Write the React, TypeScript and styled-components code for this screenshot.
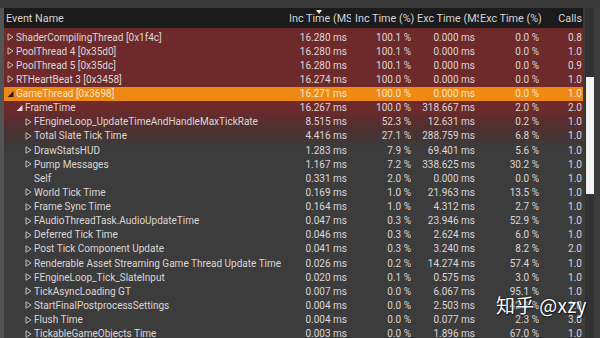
import React from "react";
import styled, { createGlobalStyle } from "styled-components";

const Global = createGlobalStyle`
  html, body { margin: 0; padding: 0; background: #3c3c3c; overflow: hidden; }
  body { font-family: Roboto, "Noto Sans", sans-serif; }
  #root { width: 600px; height: 338px; }
`;

const Page = styled.div`
  position: relative;
  width: 600px;
  height: 338px;
  background: #3c3c3c;
  display: flex;
  flex-direction: column;
  overflow: hidden;
`;

const TopStrip = styled.div`
  height: 8px;
  flex: none;
  background: #3a3a3a;
`;

const Body = styled.div`
  flex: 1;
  display: flex;
  min-height: 0;
`;

const LeftEdge = styled.div`
  width: 4px;
  flex: none;
  background: #545454;
`;

const Table = styled.div`
  flex: 1;
  display: flex;
  flex-direction: column;
  min-width: 0;
`;

const Cols = "281px 66px 64px 64px 64px 40px";

const HeaderRow = styled.div`
  position: relative;
  height: 20px;
  flex: none;
  display: grid;
  grid-template-columns: ${Cols};
  background: #1b1b1b;
  color: #d4d4d4;
  font-size: 10.8px;
  align-items: center;
`;

const HeadCell = styled.div<{ $align?: "left" | "right"; $pad?: number }>`
  overflow: hidden;
  white-space: nowrap;
  text-align: ${(p) => p.$align ?? "left"};
  padding: ${(p) => (p.$align === "right" ? `0 1px 0 0` : `0 0 0 ${p.$pad ?? 4}px`)};
`;

const SortMark = styled.div`
  position: absolute;
  left: 312px;
  top: 2px;
  width: 0;
  height: 0;
  border-left: 3px solid transparent;
  border-right: 3px solid transparent;
  border-top: 4px solid #f0f0f0;
`;

const List = styled.div`
  flex: 1;
  padding-top: 2px;
  background: linear-gradient(
    to bottom,
    #6e2a2b 0px,
    #6e2a2b 80px,
    #4c3131 102px,
    #3d3a3a 118px,
    #3c3c3c 126px
  );
`;

type Variant = "normal" | "selected";

const Row = styled.div<{ $variant: Variant }>`
  height: 14.14px;
  display: grid;
  grid-template-columns: ${Cols};
  align-items: center;
  font-size: 10px;
  white-space: nowrap;
  background: ${(p) => (p.$variant === "selected" ? "#ee8913" : "transparent")};
  color: ${(p) => (p.$variant === "selected" ? "#f6e6cc" : "#dcd6d6")};
`;

const NameCell = styled.div<{ $level: number }>`
  display: flex;
  align-items: center;
  padding-left: ${(p) => 3 + p.$level * 9}px;
  overflow: hidden;
`;

const Arrow = styled.span`
  width: 9px;
  height: 10px;
  flex: none;
  display: flex;
  align-items: center;
`;

const Num = styled.div<{ $pad?: number }>`
  text-align: right;
  padding-right: ${(p) => p.$pad ?? 4}px;
`;

const ScrollTrack = styled.div`
  position: relative;
  width: 17px;
  flex: none;
  background: #3b3b3b;
  display: flex;
  justify-content: flex-start;
`;

const ScrollGroove = styled.div`
  width: 9px;
  margin-left: 2px;
  background: #323232;
  position: relative;
`;

const Thumb = styled.div`
  position: absolute;
  left: 1px;
  top: 69px;
  width: 8px;
  height: 117px;
  background: #f4f4f4;
`;

const Watermark = styled.div`
  position: absolute;
  left: 496px;
  top: 291px;
  font-family: "Noto Sans CJK SC", Roboto, sans-serif;
  font-size: 19px;
  color: #ffffff;
  text-shadow: 0 0 2px rgba(0, 0, 0, 0.8), 1px 1px 1px rgba(0, 0, 0, 0.6);
  white-space: nowrap;
  letter-spacing: 0.3px;
`;

const Collapsed = () => (
  <svg width="7" height="8" viewBox="0 0 7 8">
    <path d="M1 0.8 L6 4 L1 7.2 Z" fill="none" stroke="#cfcfcf" strokeWidth="0.9" />
  </svg>
);

const Expanded = ({ color }: { color: string }) => (
  <svg width="7" height="8" viewBox="0 0 7 8">
    <path d="M6.5 1 L6.5 7 L0.5 7 Z" fill={color} />
  </svg>
);

type R = {
  name: string;
  level: number;
  kind: "collapsed" | "expanded" | "none";
  v: [string, string, string, string, string];
  sel?: boolean;
};

const rows: R[] = [
  { name: "ShaderCompilingThread [0x1f4c]", level: 0, kind: "collapsed", v: ["16.280 ms", "100.1 %", "0.000 ms", "0.0 %", "0.8"] },
  { name: "PoolThread 4 [0x35d0]", level: 0, kind: "collapsed", v: ["16.280 ms", "100.1 %", "0.000 ms", "0.0 %", "1.0"] },
  { name: "PoolThread 5 [0x35dc]", level: 0, kind: "collapsed", v: ["16.280 ms", "100.1 %", "0.000 ms", "0.0 %", "0.9"] },
  { name: "RTHeartBeat 3 [0x3458]", level: 0, kind: "collapsed", v: ["16.274 ms", "100.0 %", "0.000 ms", "0.0 %", "1.0"] },
  { name: "GameThread [0x3698]", level: 0, kind: "expanded", sel: true, v: ["16.271 ms", "100.0 %", "0.000 ms", "0.0 %", "1.0"] },
  { name: "FrameTime", level: 1, kind: "expanded", v: ["16.267 ms", "100.0 %", "318.667 ms", "2.0 %", "2.0"] },
  { name: "FEngineLoop_UpdateTimeAndHandleMaxTickRate", level: 2, kind: "collapsed", v: ["8.515 ms", "52.3 %", "12.631 ms", "0.2 %", "1.0"] },
  { name: "Total Slate Tick Time", level: 2, kind: "collapsed", v: ["4.416 ms", "27.1 %", "288.759 ms", "6.8 %", "1.0"] },
  { name: "DrawStatsHUD", level: 2, kind: "collapsed", v: ["1.283 ms", "7.9 %", "69.401 ms", "5.6 %", "1.0"] },
  { name: "Pump Messages", level: 2, kind: "collapsed", v: ["1.167 ms", "7.2 %", "338.625 ms", "30.2 %", "1.0"] },
  { name: "Self", level: 2, kind: "none", v: ["0.331 ms", "2.0 %", "0.000 ms", "0.0 %", "1.0"] },
  { name: "World Tick Time", level: 2, kind: "collapsed", v: ["0.169 ms", "1.0 %", "21.963 ms", "13.5 %", "1.0"] },
  { name: "Frame Sync Time", level: 2, kind: "collapsed", v: ["0.164 ms", "1.0 %", "4.312 ms", "2.7 %", "1.0"] },
  { name: "FAudioThreadTask.AudioUpdateTime", level: 2, kind: "collapsed", v: ["0.047 ms", "0.3 %", "23.946 ms", "52.9 %", "1.0"] },
  { name: "Deferred Tick Time", level: 2, kind: "collapsed", v: ["0.046 ms", "0.3 %", "2.624 ms", "6.0 %", "1.0"] },
  { name: "Post Tick Component Update", level: 2, kind: "collapsed", v: ["0.041 ms", "0.3 %", "3.240 ms", "8.2 %", "2.0"] },
  { name: "Renderable Asset Streaming Game Thread Update Time", level: 2, kind: "collapsed", v: ["0.026 ms", "0.2 %", "14.274 ms", "57.4 %", "1.0"] },
  { name: "FEngineLoop_Tick_SlateInput", level: 2, kind: "collapsed", v: ["0.020 ms", "0.1 %", "0.575 ms", "3.0 %", "1.0"] },
  { name: "TickAsyncLoading GT", level: 2, kind: "collapsed", v: ["0.007 ms", "0.0 %", "6.067 ms", "95.1 %", "1.0"] },
  { name: "StartFinalPostprocessSettings", level: 2, kind: "collapsed", v: ["0.004 ms", "0.0 %", "2.503 ms", "42.1 %", "1.0"] },
  { name: "Flush Time", level: 2, kind: "collapsed", v: ["0.004 ms", "0.0 %", "0.077 ms", "2.3 %", "3.0"] },
  { name: "TickableGameObjects Time", level: 2, kind: "collapsed", v: ["0.003 ms", "0.0 %", "1.896 ms", "67.0 %", "1.0"] },
];

export default function App() {
  return (
    <>
      <Global />
      <Page>
        <TopStrip />
        <Body>
          <LeftEdge />
          <Table>
            <HeaderRow>
              <HeadCell $pad={2}>Event Name</HeadCell>
              <HeadCell>Inc Time (MS)</HeadCell>
              <HeadCell>Inc Time (%)</HeadCell>
              <HeadCell $pad={2}>Exc Time (MS)</HeadCell>
              <HeadCell $pad={1}>Exc Time (%)</HeadCell>
              <HeadCell $align="right">Calls</HeadCell>
              <SortMark />
            </HeaderRow>
            <List>
              {rows.map((r, i) => (
                <Row key={i} $variant={r.sel ? "selected" : "normal"}>
                  <NameCell $level={r.level}>
                    <Arrow>
                      {r.kind === "collapsed" && <Collapsed />}
                      {r.kind === "expanded" && <Expanded color={r.sel ? "#2a1a0a" : "#e6dede"} />}
                    </Arrow>
                    {r.name}
                  </NameCell>
                  <Num>{r.v[0]}</Num>
                  <Num>{r.v[1]}</Num>
                  <Num>{r.v[2]}</Num>
                  <Num>{r.v[3]}</Num>
                  <Num $pad={1}>{r.v[4]}</Num>
                </Row>
              ))}
            </List>
          </Table>
          <ScrollTrack>
            <ScrollGroove>
              <Thumb />
            </ScrollGroove>
          </ScrollTrack>
        </Body>
        <Watermark>知乎 @xzy</Watermark>
      </Page>
    </>
  );
}
